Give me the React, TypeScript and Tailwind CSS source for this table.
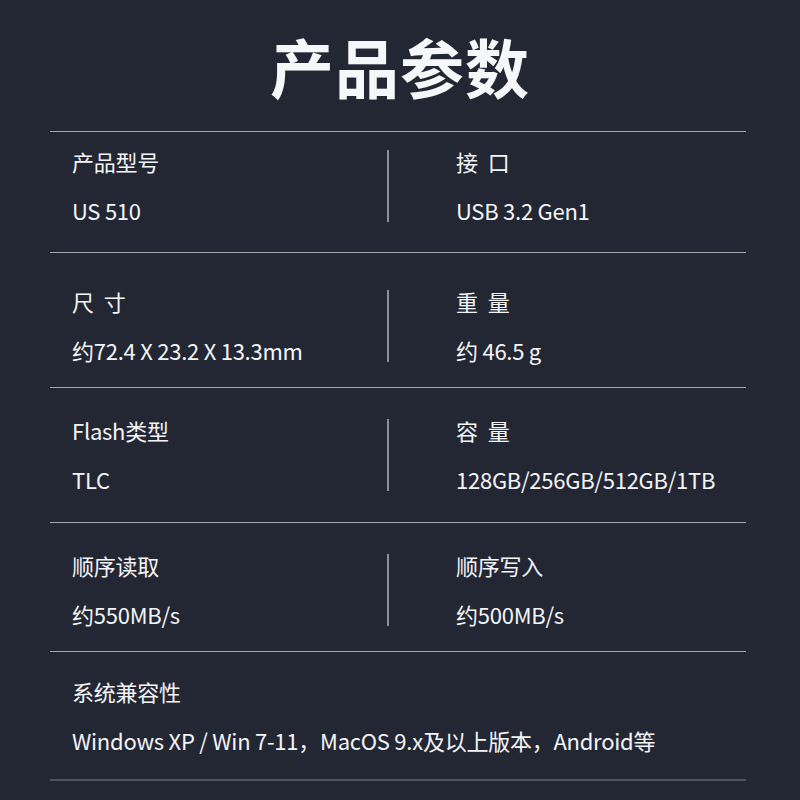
const FONT = "font-['Noto_Sans_CJK_SC','Noto_Sans',sans-serif]"

type Cell = { label: string; value: string }

const rows: { h: string; pt: string; cells: Cell[] }[] = [
  {
    h: 'h-[121px]',
    pt: 'pt-[5px]',
    cells: [
      { label: '产品型号', value: 'US 510' },
      { label: '接 口', value: 'USB 3.2 Gen1' },
    ],
  },
  {
    h: 'h-[135px]',
    pt: 'pt-[24px]',
    cells: [
      { label: '尺 寸', value: '约72.4 X 23.2 X 13.3mm' },
      { label: '重 量', value: '约 46.5 g' },
    ],
  },
  {
    h: 'h-[135px]',
    pt: 'pt-[18px]',
    cells: [
      { label: 'Flash类型', value: 'TLC' },
      { label: '容 量', value: '128GB/256GB/512GB/1TB' },
    ],
  },
  {
    h: 'h-[129px]',
    pt: 'pt-[18px]',
    cells: [
      { label: '顺序读取', value: '约550MB/s' },
      { label: '顺序写入', value: '约500MB/s' },
    ],
  },
]

// two-character labels have a wide gap between the characters
function Label({ text }: { text: string }) {
  const parts = text.split(' ')
  return (
    <span className="flex">
      {parts.map((p, i) => (
        <span key={i} className={i > 0 ? 'ml-[10px]' : ''}>
          {p}
        </span>
      ))}
    </span>
  )
}

function TextBlock({ label, value }: Cell) {
  return (
    <div className="flex flex-col text-[22px] leading-[49px] tracking-[-0.25px] text-[#f4f5f7] whitespace-nowrap">
      <Label text={label} />
      <span>{value}</span>
    </div>
  )
}

export default function App() {
  return (
    <div className={`${FONT} w-[800px] h-[800px] bg-[#232733] overflow-hidden`}>
      {/* Title */}
      <div className="h-[131px] flex items-center justify-center">
        <h1 className="text-[64px] font-bold text-[#f6f7f9] leading-none tracking-[1px] -mt-[1px]">
          产品参数
        </h1>
      </div>

      <div className="ml-[50px] w-[696px]">
        {rows.map((row, i) => (
          <div key={i} className={`border-t border-[#a5a8ae] ${row.h} ${row.pt}`}>
            <div className="flex items-center">
              <div className="w-[337px] pl-[22px]">
                <TextBlock {...row.cells[0]} />
              </div>
              <div className="w-[2px] h-[72px] bg-[#8d9098] -mt-[1px]" />
              <div className="pl-[67px]">
                <TextBlock {...row.cells[1]} />
              </div>
            </div>
          </div>
        ))}

        {/* Compatibility row */}
        <div className="border-t border-[#a5a8ae] h-[128px] pt-[15px] pl-[22px]">
          <TextBlock label="系统兼容性" value="Windows XP / Win 7-11，MacOS 9.x及以上版本，Android等" />
        </div>
        <div className="h-[2px] bg-[#4e525c]" />
      </div>
    </div>
  )
}
